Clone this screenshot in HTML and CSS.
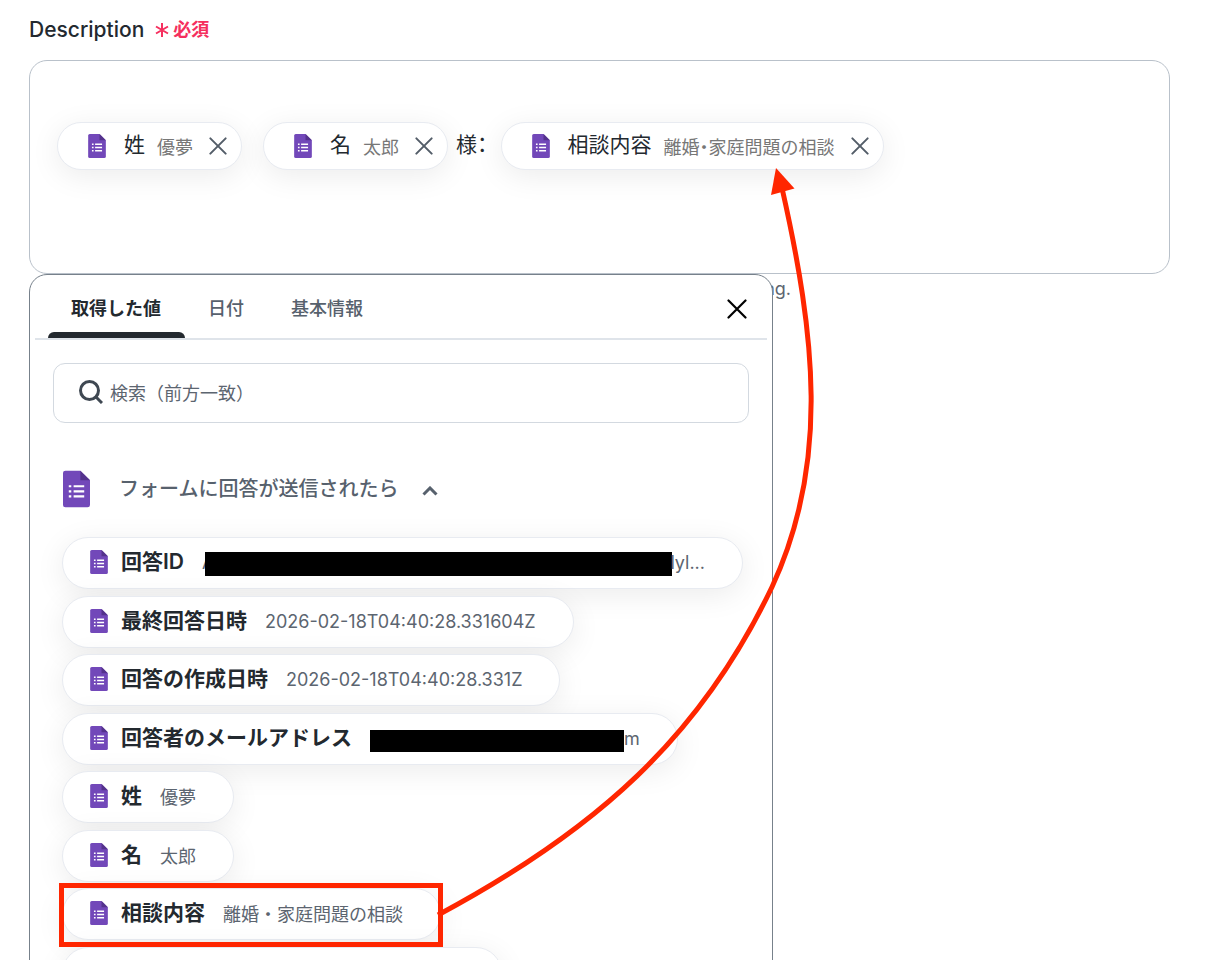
FILE: index.html
```html
<!DOCTYPE html>
<html lang="ja">
<head>
<meta charset="utf-8">
<meta name="viewport" content="width=device-width, initial-scale=1">
<title>Description</title>
<link rel="stylesheet" href="styles.css">
</head>
<body>
<svg class="sprite" aria-hidden="true">
  <symbol id="form" viewBox="0 0 28 38">
    <path d="M2.500 0H18L28 10V35.500Q28 38 25.500 38H2.500Q0 38 0 35.500V2.500Q0 0 2.500 0Z" fill="#7248b9"/>
    <path d="M18 0L28 10H18Z" fill="#54328c"/>
    <path d="M11 15h11v2.300H11zM11 20.200h11v2.300H11zM11 25.400h11v2.300H11zM6 15h2.600v2.300H6zM6 20.200h2.600v2.300H6zM6 25.400h2.600v2.300H6z" fill="#fff"/>
  </symbol>
  <symbol id="close" viewBox="0 0 20 20">
    <path d="M1.500 1.500L18.500 18.500M18.500 1.500L1.500 18.500" fill="none" stroke="currentColor" stroke-width="2.200" stroke-linecap="round"/>
  </symbol>
</svg>
<main class="page">
  <div class="label" id="description-label">Description
    <span class="required"><svg class="asterisk" viewBox="0 0 14 14" aria-hidden="true"><path d="M7 0v14M1 3.500l12 7M13 3.500l-12 7" stroke="currentColor" stroke-width="2"/></svg>必須</span>
  </div>
  <div class="field">
    <div class="editor" role="group" aria-labelledby="description-label">
      <span class="token"><svg class="form-icon"><use href="#form"/></svg><span class="token-name">姓</span><span class="token-value">優夢</span><button class="remove" type="button" aria-label="姓を削除"><svg><use href="#close"/></svg></button></span>
      <span class="token"><svg class="form-icon"><use href="#form"/></svg><span class="token-name">名</span><span class="token-value">太郎</span><button class="remove" type="button" aria-label="名を削除"><svg><use href="#close"/></svg></button></span>
      <span class="token-name">様：</span>
      <span class="token"><svg class="form-icon"><use href="#form"/></svg><span class="token-name">相談内容</span><span class="token-value">離婚・家庭問題の相談</span><button class="remove" type="button" aria-label="相談内容を削除"><svg><use href="#close"/></svg></button></span>
    </div>
    <p class="help">ng.</p>
    <section class="panel">
      <header class="panel-head">
        <div class="tabs" role="tablist">
          <button class="tab" type="button" role="tab" aria-selected="true">取得した値</button>
          <button class="tab" type="button" role="tab" aria-selected="false">日付</button>
          <button class="tab" type="button" role="tab" aria-selected="false">基本情報</button>
        </div>
        <button class="panel-close" type="button" aria-label="閉じる"><svg><use href="#close"/></svg></button>
      </header>
      <label class="search">
        <svg viewBox="0 0 24 24" aria-hidden="true"><circle cx="10.500" cy="10.500" r="9" /><path d="M17 17L23 23"/></svg>
        <input type="text" placeholder="検索（前方一致）" aria-label="検索（前方一致）">
      </label>
      <button class="group" type="button" aria-expanded="true">
        <svg class="group-icon"><use href="#form"/></svg>
        <span>フォームに回答が送信されたら</span>
        <svg class="chevron" viewBox="0 0 16 10" aria-hidden="true"><path d="M1.500 8.500L8 2L14.500 8.500"/></svg>
      </button>
      <ul class="values">
        <li><button class="value" type="button"><svg class="form-icon"><use href="#form"/></svg><strong>回答ID</strong><span class="sample">A<span class="redacted redacted-id"></span>lyl...</span></button></li>
        <li><button class="value" type="button"><svg class="form-icon"><use href="#form"/></svg><strong>最終回答日時</strong><span class="sample">2026-02-18T04:40:28.331604Z</span></button></li>
        <li><button class="value" type="button"><svg class="form-icon"><use href="#form"/></svg><strong>回答の作成日時</strong><span class="sample">2026-02-18T04:40:28.331Z</span></button></li>
        <li><button class="value" type="button"><svg class="form-icon"><use href="#form"/></svg><strong>回答者のメールアドレス</strong><span class="sample"><span class="redacted redacted-mail"></span>m</span></button></li>
        <li><button class="value" type="button"><svg class="form-icon"><use href="#form"/></svg><strong>姓</strong><span class="sample">優夢</span></button></li>
        <li><button class="value" type="button"><svg class="form-icon"><use href="#form"/></svg><strong>名</strong><span class="sample">太郎</span></button></li>
        <li><button class="value" type="button"><svg class="form-icon"><use href="#form"/></svg><strong>相談内容</strong><span class="sample">離婚・家庭問題の相談</span></button></li>
        <li><span class="value value-next"></span></li>
      </ul>
    </section>
  </div>
  <svg class="annotation" viewBox="0 0 830 960" aria-hidden="true">
    <rect x="61.500" y="885.500" width="379" height="59"/>
    <path d="M438 915C595 831 700 738 772 587C830 462 815 335 782 188"/>
    <path class="arrow-head" d="M776 168L794.500 188.500L771 195Z"/>
  </svg>
</main>
</body>
</html>
```

FILE: styles.css
```css
* {
  box-sizing: border-box;
}

body {
  margin: 0;
  background: #fff;
  color: #23292f;
  font-family: Inter, "Noto Sans CJK JP", sans-serif;
  font-size: 18px;
}

button,
input {
  font: inherit;
  color: inherit;
}

button {
  padding: 0;
  border: 0;
  background: none;
  cursor: pointer;
}

svg {
  display: block;
  flex: none;
}

.sprite {
  position: absolute;
  width: 0;
  height: 0;
}

.page {
  position: relative;
  min-height: 100vh;
  overflow: hidden;
  padding: 16px 60px 0 29px;
}

.label {
  display: flex;
  align-items: center;
  gap: 11px;
  margin-bottom: 16px;
  font-size: 21px;
  line-height: 28px;
  font-weight: 500;
}

.required {
  display: flex;
  align-items: center;
  gap: 4px;
  color: #f52f5e;
  font-size: 18px;
  font-weight: 700;
}

.asterisk {
  width: 14px;
  height: 14px;
}

.field {
  position: relative;
}

.editor {
  display: flex;
  flex-wrap: wrap;
  align-items: center;
  padding: 61px 14px 103px;
  border: 1px solid #b9c1ca;
  border-radius: 18px;
}

.token {
  display: flex;
  align-items: center;
  height: 48px;
  margin: 0 8px 0 13px;
  padding: 0 14px 0 30px;
  border: 1px solid #e8ebf1;
  border-radius: 24px;
  background: #fff;
  box-shadow: 0 6px 30px rgba(0, 0, 0, 0.08);
}

.form-icon {
  width: 18px;
  height: 24px;
}

.token-name {
  padding-bottom: 2px;
  font-size: 21px;
  line-height: 30px;
  font-feature-settings: "halt";
}

.token .token-name {
  margin: 0 12px 0 18px;
}

.token-value {
  color: #777;
  font-feature-settings: "halt";
}

.remove {
  margin-left: 16px;
  color: #535d68;
}

.remove svg {
  width: 18px;
  height: 18px;
}

.help {
  max-width: 762px;
  margin: 3px 0 0;
  color: #5c6570;
  line-height: 24px;
  text-align: right;
}

.panel {
  position: absolute;
  top: 214px;
  left: 0;
  width: 744px;
  max-width: 100%;
  padding: 0 5px 40px;
  border: 1px solid #77818b;
  border-radius: 18px;
  background: #fff;
}

.panel-head {
  display: flex;
  justify-content: space-between;
  align-items: center;
  padding: 0 20px 0 13px;
  border-bottom: 2px solid #dfe4ea;
}

.tabs {
  display: flex;
}

.tab {
  position: relative;
  height: 63px;
  padding: 0 24px 0 23px;
  color: #57616d;
  font-weight: 500;
}

.tab[aria-selected="true"] {
  color: #23292f;
  font-weight: 700;
}

.tab[aria-selected="true"]::after {
  content: "";
  position: absolute;
  inset: auto 0 0;
  height: 6px;
  border-radius: 6px 6px 0 0;
  background: #23292f;
}

.panel-close {
  padding-top: 4px;
  color: #000;
}

.panel-close svg {
  width: 20px;
  height: 20px;
}

.search {
  display: flex;
  align-items: center;
  gap: 7px;
  height: 60px;
  margin: 23px 18px 47px;
  padding: 0 25px;
  border: 1px solid #d3d9e0;
  border-radius: 12px;
}

.search svg {
  width: 24px;
  height: 24px;
  margin-bottom: 2px;
  fill: none;
  stroke: #3f4852;
  stroke-width: 3;
}

.search input {
  flex: 1;
  min-width: 0;
  padding: 0;
  border: 0;
  outline: 0;
  background: none;
}

.search input::placeholder {
  color: #5c6570;
  opacity: 1;
}

.group {
  display: flex;
  align-items: center;
  margin-left: 28px;
  color: #57616d;
  font-size: 20px;
  line-height: 38px;
  font-weight: 500;
}

.group-icon {
  width: 27px;
  height: 38px;
  margin-right: 29px;
}

.chevron {
  width: 16px;
  height: 10px;
  margin: 3px 0 0 24px;
  fill: none;
  stroke: currentColor;
  stroke-width: 3;
}

.values {
  margin: 29px 0 0;
  padding: 0 22px 0 27px;
  list-style: none;
}

.values li {
  display: flex;
  margin-bottom: 7px;
}

.values li:nth-child(even) {
  margin-bottom: 6px;
}

.value {
  display: flex;
  align-items: center;
  height: 52px;
  padding: 0 37px 2px 27px;
  border: 1px solid #e8ebf1;
  border-radius: 26px;
  background: #fff;
  box-shadow: 0 6px 30px rgba(0, 0, 0, 0.08);
}

.value strong {
  margin: 0 18px 0 13px;
  font-size: 21px;
  line-height: 30px;
  font-weight: 600;
}

.value-next {
  width: 440px;
}

.sample {
  display: flex;
  align-items: center;
  color: #5c6570;
}

.redacted {
  height: 24px;
  background: #000;
}

.redacted-id {
  width: 467px;
  margin: 4px -2px 0 -9px;
}

.redacted-mail {
  width: 254px;
  height: 22px;
  margin-top: 6px;
}

.annotation {
  position: absolute;
  top: 0;
  left: 0;
  width: 830px;
  height: 960px;
  fill: none;
  stroke: #ff2600;
  stroke-width: 5;
  pointer-events: none;
}

.annotation .arrow-head {
  fill: #ff2600;
  stroke: none;
}
```
